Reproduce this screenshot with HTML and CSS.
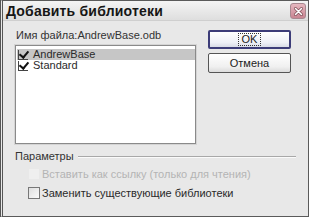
FILE: index.html
```html
<!DOCTYPE html>
<html>
<head>
<meta charset="utf-8">
<link rel="stylesheet" href="styles.css">
</head>
<body>
<div class="window">
  <div class="titlebar">
    <span class="title">Добавить библиотеки</span>
    <span class="close">
      <svg width="13" height="13" viewBox="0 0 13 13"><path d="M3.5 3.5 L9.5 9.5 M9.5 3.5 L3.5 9.5" stroke="#7a4a52" stroke-width="3" stroke-linecap="round"/><path d="M3.5 3.5 L9.5 9.5 M9.5 3.5 L3.5 9.5" stroke="#fff" stroke-width="1.6" stroke-linecap="round"/></svg>
    </span>
  </div>
  <div class="content">
    <div class="left">
      <div class="label">Имя файла:AndrewBase.odb</div>
      <div class="list">
        <div class="row selected"><span class="check on"></span><span>AndrewBase</span></div>
        <div class="row"><span class="check on"></span><span>Standard</span></div>
      </div>
    </div>
    <div class="buttons">
      <div class="btn default"><span class="focus">OK</span></div>
      <div class="btn">Отмена</div>
    </div>
  </div>
  <div class="options">
    <div class="legend"><span>Параметры</span><span class="rule"></span></div>
    <div class="opt disabled"><span class="box"></span><span>Вставить как ссылку (только для чтения)</span></div>
    <div class="opt"><span class="box"></span><span>Заменить существующие библиотеки</span></div>
  </div>
</div>
</body>
</html>
```
FILE: styles.css
```css
html, body {
  margin: 0;
  padding: 0;
  background: #e4e4e4;
}
body {
  width: 309px;
  height: 217px;
  font-family: "Liberation Sans", Arial, sans-serif;
  font-size: 11px;
  color: #2a2a2a;
}
.window {
  box-sizing: border-box;
  width: 309px;
  height: 217px;
  border: 1px solid #5a5a5a;
  border-left: 3px double #555;
  background: #e8e8e8;
}
.titlebar {
  height: 19px;
  display: flex;
  align-items: center;
  justify-content: space-between;
  padding: 0 2px 0 3px;
  background: linear-gradient(#f4f4f4, #dedede);
  border-bottom: 1px solid #cfcfcf;
}
.title {
  font-weight: bold;
  font-size: 14px;
  color: #161616;
  letter-spacing: 0.2px;
}
.close {
  width: 14px;
  height: 14px;
  border-radius: 3px;
  background: linear-gradient(#e6b8c0, #c98592);
  border: 1px solid #a88890;
  display: flex;
  align-items: center;
  justify-content: center;
  margin-top: 1px;
}
.content {
  display: flex;
  padding: 8px 0 0 12px;
  gap: 12px;
}
.left {
  width: 181px;
}
.label {
  line-height: 13px;
  padding-left: 1px;
  color: #333;
}
.list {
  box-sizing: border-box;
  margin-top: 3px;
  height: 99px;
  background: #fff;
  border: 1px solid #8a8a8a;
  box-shadow: 0 0 0 1px #d4d4d4;
  padding: 3px 0 0 1px;
}
.row {
  height: 11px;
  line-height: 11px;
  display: flex;
  align-items: center;
  gap: 5px;
  padding-left: 1px;
}
.row.selected {
  background: #c6c6c6;
}
.check {
  box-sizing: border-box;
  width: 10px;
  height: 10px;
  position: relative;
  border-left: 1px solid #444;
  border-bottom: 1px solid #444;
}
.check.on::after {
  content: "";
  position: absolute;
  left: 2px;
  top: -1px;
  width: 4px;
  height: 7px;
  border: solid #111;
  border-width: 0 2px 2px 0;
  transform: rotate(40deg);
}
.buttons {
  display: flex;
  flex-direction: column;
  gap: 4px;
  padding-top: 1px;
}
.btn {
  box-sizing: border-box;
  width: 83px;
  height: 20px;
  display: flex;
  align-items: center;
  justify-content: center;
  border: 1px solid #555;
  border-radius: 2px;
  background: linear-gradient(#ffffff, #f0f0f0 70%, #dcdcdc);
  color: #222;
}
.btn.default {
  border: 2px solid #3c3c78;
  height: 19px;
  background: linear-gradient(#ffffff, #eef0f6 70%, #d8dbe6);
}
.focus {
  outline: 1px dotted #333;
  padding: 0 3px;
  line-height: 11px;
}
.options {
  padding: 6px 12px 0 12px;
}
.legend {
  display: flex;
  align-items: center;
  gap: 4px;
  line-height: 13px;
  color: #333;
}
.rule {
  flex: 1;
  height: 0;
  border-top: 1px solid #a8a8a8;
  border-bottom: 1px solid #fafafa;
}
.opt {
  display: flex;
  align-items: center;
  gap: 2px;
  height: 16px;
  margin-top: 3px;
  padding-left: 13px;
}
.box {
  box-sizing: border-box;
  width: 12px;
  height: 12px;
  border: 1px solid #777;
  background: linear-gradient(135deg, #dedede, #fafafa);
}
.opt.disabled {
  color: #b4b4b4;
}
.opt.disabled .box {
  border-color: #e8e8e8;
  background: #efefef;
}
```
